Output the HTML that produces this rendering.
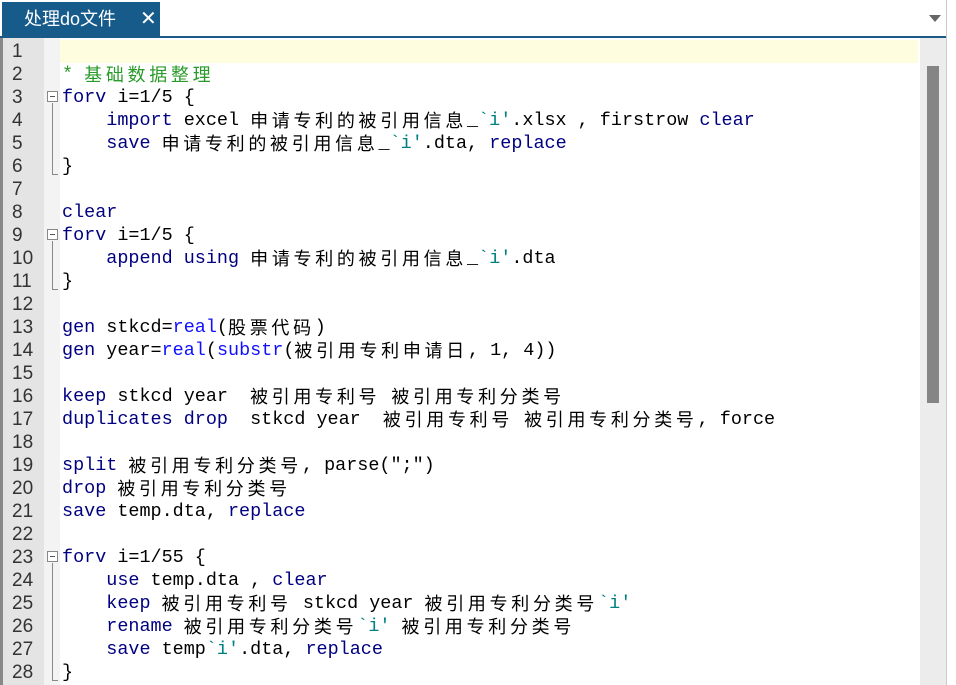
<!DOCTYPE html>
<html><head><meta charset="utf-8"><style>
*{margin:0;padding:0;box-sizing:border-box}
body{width:956px;height:685px;overflow:hidden;background:#fff;position:relative;font-family:"Liberation Sans","Noto Sans CJK SC",sans-serif}
.tab{position:absolute;left:2px;top:2px;width:158px;height:35px;background:#175b8b;color:#fff;font-size:18px;line-height:35px;padding-left:22px}
.tab .x{position:absolute;left:138px;top:0;font-size:20px}
.bar{position:absolute;left:0;top:36px;width:946px;height:2px;background:#1a5a86}
.tri{position:absolute;left:929px;top:15px;width:0;height:0;border-left:6px solid transparent;border-right:6px solid transparent;border-top:7px solid #666}
.edge{position:absolute;left:0;top:38px;width:3px;height:647px;background:#888}
.gut{position:absolute;left:3px;top:38px;width:41px;height:647px;background:#e4e4e4}
.fold{position:absolute;left:44px;top:38px;width:16px;height:647px;background:#f3f3f3}
.hl{position:absolute;left:60px;top:40px;width:858px;height:23px;background:#fffde0}
.sb{position:absolute;left:920px;top:38px;width:26px;height:647px;background:#ececec}
.th{position:absolute;left:927px;top:66px;width:12px;height:337px;background:#858585}
.rb{position:absolute;left:946px;top:0;width:10px;height:685px;background:#fff;border-left:1px solid #ccc}
.ln{position:absolute;left:12px;top:40px;font-size:19px;color:#333}
.ln div{height:23px;line-height:23px}
.code{position:absolute;left:62px;top:40px;font-family:"Liberation Mono","Noto Sans CJK SC",monospace;font-size:18.45px;color:#000}
.code div{height:23px;line-height:23px;white-space:pre;overflow:visible}
.c{font-family:"Noto Sans CJK SC",sans-serif;letter-spacing:3.69px;font-size:18px;line-height:23px;vertical-align:top}
.k{color:#000080}.f{color:#1010ff}.t{color:#008080}.g{color:#2a9a2a}
.box{position:absolute;left:47px;width:11px;height:11px;border:1px solid #888;background:#fff}
.box:after{content:"";position:absolute;left:2px;top:4px;width:5px;height:1px;background:#555}
.vl{position:absolute;left:52px;width:1px;background:#888}
.cn{position:absolute;left:52px;width:6px;height:1px;background:#888}
</style></head><body>
<div class="tab">处理do文件<span class="x">✕</span></div>
<div class="tri"></div>
<div class="bar"></div>
<div class="edge"></div><div class="gut"></div><div class="fold"></div>
<div class="hl"></div>
<div class="sb"></div><div class="th"></div>
<div class="rb"></div>

<div class="ln"><div>1</div><div>2</div><div>3</div><div>4</div><div>5</div><div>6</div><div>7</div><div>8</div><div>9</div><div>10</div><div>11</div><div>12</div><div>13</div><div>14</div><div>15</div><div>16</div><div>17</div><div>18</div><div>19</div><div>20</div><div>21</div><div>22</div><div>23</div><div>24</div><div>25</div><div>26</div><div>27</div><div>28</div></div>

<div class="box" style="top:91px"></div><div class="vl" style="top:103px;height:71px"></div><div class="cn" style="top:174px"></div>
<div class="box" style="top:229px"></div><div class="vl" style="top:241px;height:48px"></div><div class="cn" style="top:289px"></div>
<div class="box" style="top:551px"></div><div class="vl" style="top:563px;height:117px"></div><div class="cn" style="top:680px"></div>

<div class="code">
<div> </div>
<div><span class="g">* <span class="c">基础数据整理</span></span></div>
<div><span class="k">forv</span> i=1/5 {</div>
<div>    <span class="k">import</span> excel <span class="c">申请专利的被引用信息</span>_<span class="t">`i'</span>.xlsx , firstrow <span class="k">clear</span></div>
<div>    <span class="k">save</span> <span class="c">申请专利的被引用信息</span>_<span class="t">`i'</span>.dta, <span class="k">replace</span></div>
<div>}</div>
<div> </div>
<div><span class="k">clear</span></div>
<div><span class="k">forv</span> i=1/5 {</div>
<div>    <span class="k">append</span> <span class="k">using</span> <span class="c">申请专利的被引用信息</span>_<span class="t">`i'</span>.dta</div>
<div>}</div>
<div> </div>
<div><span class="k">gen</span> stkcd=<span class="f">real</span>(<span class="c">股票代码</span>)</div>
<div><span class="k">gen</span> year=<span class="f">real</span>(<span class="f">substr</span>(<span class="c">被引用专利申请日</span>, 1, 4))</div>
<div> </div>
<div><span class="k">keep</span> stkcd year  <span class="c">被引用专利号</span> <span class="c">被引用专利分类号</span></div>
<div><span class="k">duplicates drop</span>  stkcd year  <span class="c">被引用专利号</span> <span class="c">被引用专利分类号</span>, force</div>
<div> </div>
<div><span class="k">split</span> <span class="c">被引用专利分类号</span>, parse(";")</div>
<div><span class="k">drop</span> <span class="c">被引用专利分类号</span></div>
<div><span class="k">save</span> temp.dta, <span class="k">replace</span></div>
<div> </div>
<div><span class="k">forv</span> i=1/55 {</div>
<div>    <span class="k">use</span> temp.dta , <span class="k">clear</span></div>
<div>    <span class="k">keep</span> <span class="c">被引用专利号</span> stkcd year <span class="c">被引用专利分类号</span><span class="t">`i'</span></div>
<div>    <span class="k">rename</span> <span class="c">被引用专利分类号</span><span class="t">`i'</span> <span class="c">被引用专利分类号</span></div>
<div>    <span class="k">save</span> temp<span class="t">`i'</span>.dta, <span class="k">replace</span></div>
<div>}</div>
</div>
</body></html>
